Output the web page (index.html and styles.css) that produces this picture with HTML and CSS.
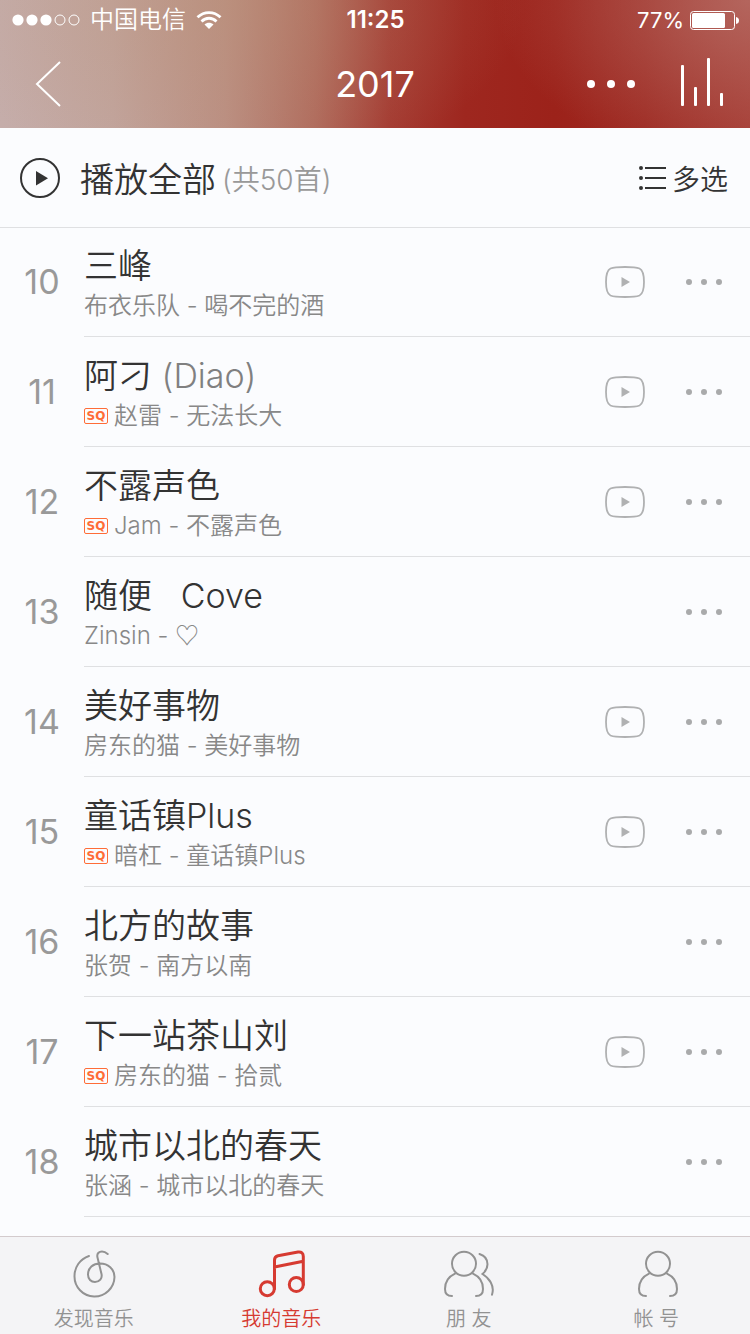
FILE: index.html
```
<!DOCTYPE html>
<html lang="zh-CN">

<head>
    <meta charset="UTF-8">
    <meta name="viewport" content="width=device-width, initial-scale=1.0">
    <title>2017</title>
    <link rel="stylesheet" href="styles.css">
</head>

<body>
    <!-- shared icons -->
    <svg class="sprite" aria-hidden="true">
        <symbol id="icon-video" viewBox="0 0 40 32">
            <path d="M20 1C28 1 32 1.500 34.500 2.500C37.500 4 39 7 39 16C39 25 37.500 28 34.500 29.500C32 30.500 28 31 20 31C12 31 8 30.500 5.500 29.500C2.500 28 1 25 1 16C1 7 2.500 4 5.500 2.500C8 1.500 12 1 20 1Z" fill="none" stroke="currentColor" stroke-width="1.800" />
            <path d="M16.500 11V21L25 16Z" fill="currentColor" />
        </symbol>
        <symbol id="icon-more" viewBox="0 0 36 6">
            <circle cx="3" cy="3" r="3" />
            <circle cx="18" cy="3" r="3" />
            <circle cx="33" cy="3" r="3" />
        </symbol>
    </svg>

    <header class="header">
        <div class="status">
            <div class="status-left">
                <svg class="signal" viewBox="0 0 68 12" aria-hidden="true">
                    <g fill="#fff">
                        <circle cx="6" cy="6" r="5.600" />
                        <circle cx="20" cy="6" r="5.600" />
                        <circle cx="34" cy="6" r="5.600" />
                    </g>
                    <g fill="none" stroke="#fff">
                        <circle cx="48" cy="6" r="5" />
                        <circle cx="62" cy="6" r="5" />
                    </g>
                </svg>
                <span>中国电信</span>
                <svg class="wifi" viewBox="0 0 26 18" aria-hidden="true">
                    <g fill="none" stroke="#fff" stroke-width="2.800">
                        <path d="M1.500 6.300C8 0 18 0 24.500 6.300" />
                        <path d="M5.500 10.400C9.800 6.200 16.200 6.200 20.500 10.400" />
                    </g>
                    <path d="M8.500 13.500C11 11.200 15 11.200 17.500 13.500L13 18Z" fill="#fff" />
                </svg>
            </div>
            <span class="time">11:25</span>
            <div class="status-right">
                <span>77%</span>
                <svg class="battery" viewBox="0 0 49 20" aria-hidden="true">
                    <rect x="0.500" y="1.500" width="44" height="18" rx="3" fill="none" stroke="#fff" />
                    <rect x="2" y="3" width="33" height="15" rx="1.500" fill="#fff" />
                    <path d="M46 7Q49 7.500 49 10.500Q49 13.500 46 14Z" fill="#fff" />
                </svg>
            </div>
        </div>
        <div class="navbar">
            <button type="button" class="icon-btn back" aria-label="返回">
                <svg width="26" height="46" viewBox="0 0 26 46"><path d="M25 1L2 23L25 45" fill="none" stroke="#fff" stroke-width="2" /></svg>
            </button>
            <h1>2017</h1>
            <div class="nav-actions">
                <button type="button" class="icon-btn" aria-label="更多">
                    <svg width="48" height="8" viewBox="0 0 48 8" fill="#fff"><circle cx="4" cy="4" r="4" /><circle cx="24" cy="4" r="4" /><circle cx="44" cy="4" r="4" /></svg>
                </button>
                <button type="button" class="icon-btn playing" aria-label="正在播放">
                    <svg width="42" height="52" viewBox="0 0 42 52" fill="#fff"><rect y="7" width="3" height="41" rx="1" /><rect x="13" y="29" width="3" height="19" rx="1" /><rect x="26" width="3" height="48" rx="1" /><rect x="39" y="35" width="3" height="13" rx="1" /></svg>
                </button>
            </div>
        </div>
    </header>

    <main>
        <div class="toolbar">
            <button type="button" class="play-all">
                <svg width="40" height="40" viewBox="0 0 40 40" aria-hidden="true"><circle cx="20" cy="20" r="19" fill="none" stroke="#333" stroke-width="2" /><path d="M16 13V27.500L28 20.300Z" fill="#333" /></svg>
                <span class="play-label">播放全部</span>
                <span class="count">(共50首)</span>
            </button>
            <button type="button" class="multi">
                <svg width="28" height="26" viewBox="0 0 28 26" aria-hidden="true"><g fill="#333"><circle cx="2" cy="3" r="2" /><circle cx="2" cy="13" r="2" /><circle cx="2" cy="23" r="2" /></g><path d="M6 3H27M6 13H27M6 23H27" stroke="#333" stroke-width="2" /></svg>
                多选
            </button>
        </div>

        <ol class="songs">
            <li>
                <span class="num">10</span>
                <div class="song">
                    <div class="info">
                        <h2>三峰</h2>
                        <p>布衣乐队 - 喝不完的酒</p>
                    </div>
                    <button type="button" class="icon-btn" aria-label="播放MV"><svg class="video"><use href="#icon-video" /></svg></button>
                    <button type="button" class="icon-btn" aria-label="更多"><svg class="more"><use href="#icon-more" /></svg></button>
                </div>
            </li>
            <li>
                <span class="num">11</span>
                <div class="song">
                    <div class="info">
                        <h2>阿刁 <span class="alias">(Diao)</span></h2>
                        <p><span class="sq">SQ</span>赵雷 - 无法长大</p>
                    </div>
                    <button type="button" class="icon-btn" aria-label="播放MV"><svg class="video"><use href="#icon-video" /></svg></button>
                    <button type="button" class="icon-btn" aria-label="更多"><svg class="more"><use href="#icon-more" /></svg></button>
                </div>
            </li>
            <li>
                <span class="num">12</span>
                <div class="song">
                    <div class="info">
                        <h2>不露声色</h2>
                        <p><span class="sq">SQ</span>Jam - 不露声色</p>
                    </div>
                    <button type="button" class="icon-btn" aria-label="播放MV"><svg class="video"><use href="#icon-video" /></svg></button>
                    <button type="button" class="icon-btn" aria-label="更多"><svg class="more"><use href="#icon-more" /></svg></button>
                </div>
            </li>
            <li>
                <span class="num">13</span>
                <div class="song">
                    <div class="info">
                        <h2>随便&nbsp;&nbsp; Cove</h2>
                        <p>Zinsin -&nbsp;<span class="heart">♡</span></p>
                    </div>
                    <button type="button" class="icon-btn" aria-label="更多"><svg class="more"><use href="#icon-more" /></svg></button>
                </div>
            </li>
            <li>
                <span class="num">14</span>
                <div class="song">
                    <div class="info">
                        <h2>美好事物</h2>
                        <p>房东的猫 - 美好事物</p>
                    </div>
                    <button type="button" class="icon-btn" aria-label="播放MV"><svg class="video"><use href="#icon-video" /></svg></button>
                    <button type="button" class="icon-btn" aria-label="更多"><svg class="more"><use href="#icon-more" /></svg></button>
                </div>
            </li>
            <li>
                <span class="num">15</span>
                <div class="song">
                    <div class="info">
                        <h2>童话镇Plus</h2>
                        <p><span class="sq">SQ</span>暗杠 - 童话镇Plus</p>
                    </div>
                    <button type="button" class="icon-btn" aria-label="播放MV"><svg class="video"><use href="#icon-video" /></svg></button>
                    <button type="button" class="icon-btn" aria-label="更多"><svg class="more"><use href="#icon-more" /></svg></button>
                </div>
            </li>
            <li>
                <span class="num">16</span>
                <div class="song">
                    <div class="info">
                        <h2>北方的故事</h2>
                        <p>张贺 - 南方以南</p>
                    </div>
                    <button type="button" class="icon-btn" aria-label="更多"><svg class="more"><use href="#icon-more" /></svg></button>
                </div>
            </li>
            <li>
                <span class="num">17</span>
                <div class="song">
                    <div class="info">
                        <h2>下一站茶山刘</h2>
                        <p><span class="sq">SQ</span>房东的猫 - 拾贰</p>
                    </div>
                    <button type="button" class="icon-btn" aria-label="播放MV"><svg class="video"><use href="#icon-video" /></svg></button>
                    <button type="button" class="icon-btn" aria-label="更多"><svg class="more"><use href="#icon-more" /></svg></button>
                </div>
            </li>
            <li>
                <span class="num">18</span>
                <div class="song">
                    <div class="info">
                        <h2>城市以北的春天</h2>
                        <p>张涵 - 城市以北的春天</p>
                    </div>
                    <button type="button" class="icon-btn" aria-label="更多"><svg class="more"><use href="#icon-more" /></svg></button>
                </div>
            </li>
        </ol>
    </main>

    <nav class="tabs">
        <a href="#discover">
            <svg width="48" height="48" viewBox="0 0 48 48" aria-hidden="true"><path d="M19 6C10 9 4.500 17 4.500 26A20 20 0 0 0 44.500 27C44.500 19 38 13.500 30 13.500C23 13.500 18 18 18 24.500C18 29 21 32 25 32C29.500 32 32.500 28.500 31.500 24L27.500 7.500C26.500 3.500 29 1.500 32 1.500C34 1.500 36 2.500 37.700 4" /></svg>
            <span>发现音乐</span>
        </a>
        <a href="#mine" class="active">
            <svg width="48" height="48" viewBox="0 0 48 48" aria-hidden="true"><circle cx="10.300" cy="38.700" r="7" /><circle cx="39.300" cy="34.500" r="7" /><path d="M17.500 38.700V10Q17.500 6.500 21 5.700L41 2.100Q46.300 1.500 46.300 6.500V34.500M17.500 17L46.300 11.300" /></svg>
            <span>我的音乐</span>
        </a>
        <a href="#friends">
            <svg width="50" height="48" viewBox="0 0 50 48" aria-hidden="true"><circle cx="20" cy="13.700" r="12" /><path d="M11 23.700C5 26.500 1 32 1 39C1 43.500 3.500 46 8 46M29 23.700C35 26.500 39 32 39 39C39 43.500 36.500 46 32 46M35.500 4C40.500 5.500 43.500 9.500 43.500 14.300C43.500 18 41.500 21.500 38.500 24C45 28 51 35.500 48 44.700" /></svg>
            <span>朋 友</span>
        </a>
        <a href="#account">
            <svg width="44" height="48" viewBox="-4 0 44 48" aria-hidden="true"><circle cx="20" cy="13.700" r="12" /><path d="M11 23.700C5 26.500 1 32 1 39C1 43.500 3.500 46 8 46M29 23.700C35 26.500 39 32 39 39C39 43.500 36.500 46 32 46" /></svg>
            <span>帐 号</span>
        </a>
    </nav>
</body>

</html>
```
FILE: styles.css
```
* {
    margin: 0;
    padding: 0;
    box-sizing: border-box;
}

body {
    min-height: 100vh;
    display: flex;
    flex-direction: column;
    background: #fbfcfe;
    color: #333;
    font-family: 'Inter', 'Noto Sans CJK SC', sans-serif;
    font-weight: 350;
}

button {
    border: none;
    background: none;
    color: inherit;
    font: inherit;
    cursor: pointer;
}

svg {
    display: block;
    flex-shrink: 0;
}

.sprite {
    position: absolute;
    width: 0;
    height: 0;
}

.icon-btn {
    display: flex;
    align-items: center;
}

/* Header */
.header {
    color: #fff;
    background:
        radial-gradient(ellipse 34% 130% at 100% 0%, rgba(190, 130, 122, 0.6), rgba(190, 130, 122, 0)),
        radial-gradient(ellipse 40% 140% at 30% 0%, rgba(186, 146, 118, 0.4), rgba(186, 146, 118, 0)),
        linear-gradient(90deg, #c5adaa 0%, #c2a59e 15%, #bb8f83 30%, #b06a5c 42%, #a43a31 52%, #9e271f 62%, #9c221a 74%, #9e2a22 86%, #a53a32 100%);
}

.status {
    height: 40px;
    padding: 0 11px 0 12px;
    display: grid;
    grid-template-columns: 1fr auto 1fr;
    align-items: center;
    font-size: 24px;
    line-height: 40px;
}

.status-left,
.status-right {
    display: flex;
    align-items: center;
}

.status-left {
    gap: 10px;
}

.status-right {
    justify-content: flex-end;
    gap: 6px;
    font-size: 22px;
    font-weight: 400;
}

.signal {
    width: 68px;
    height: 12px;
}

.wifi {
    width: 26px;
    height: 18px;
}

.battery {
    width: 49px;
    height: 20px;
}

.time {
    font-weight: 600;
}

.navbar {
    height: 88px;
    padding: 0 27px;
    display: grid;
    grid-template-columns: 1fr auto 1fr;
    align-items: center;
}

.back {
    padding-left: 8px;
}

.navbar h1 {
    font-size: 36px;
    font-weight: 400;
}

.nav-actions {
    display: flex;
    align-items: center;
    justify-content: flex-end;
    gap: 46px;
}

/* Play all / multi select */
.toolbar {
    height: 100px;
    padding: 0 22px 0 20px;
    display: flex;
    align-items: center;
    justify-content: space-between;
    border-bottom: 1px solid #dfe0e2;
}

.play-all,
.multi {
    display: flex;
    align-items: center;
}

.play-label {
    margin-left: 20px;
    font-size: 34px;
}

.count {
    margin-left: 6px;
    font-size: 28px;
    color: #999;
}

.multi {
    gap: 5px;
    font-size: 28px;
}

/* Song list */
.songs {
    list-style: none;
    margin-top: -1px;
}

.songs li {
    height: 110px;
    display: flex;
}

.num {
    width: 84px;
    line-height: 110px;
    text-align: center;
    font-size: 34px;
    font-weight: 400;
    color: #999;
}

.song {
    flex: 1;
    min-width: 0;
    padding-right: 28px;
    display: flex;
    align-items: center;
    gap: 41px;
    border-bottom: 1px solid #dfe0e2;
}

.info {
    flex: 1;
    min-width: 0;
    padding-top: 4px;
}

.info h2 {
    font-size: 34px;
    font-weight: 350;
    line-height: 44px;
}

.alias {
    color: #808080;
}

.info p {
    display: flex;
    align-items: center;
    font-size: 24px;
    line-height: 36px;
    color: #888;
}

.sq {
    width: 24px;
    height: 16px;
    margin-right: 6px;
    border: 1px solid #ff6c37;
    border-radius: 2px;
    color: #ff6c37;
    font-family: 'DejaVu Sans', sans-serif;
    font-size: 12px;
    font-weight: bold;
    line-height: 14px;
    text-align: center;
}

.heart {
    font-family: 'DejaVu Sans', sans-serif;
}

.video {
    width: 40px;
    height: 32px;
    color: #b0b1b2;
}

.more {
    width: 36px;
    height: 6px;
    fill: #a9aaab;
}

/* Bottom tabs */
.tabs {
    height: 98px;
    margin-top: auto;
    padding-top: 13px;
    display: grid;
    grid-template-columns: repeat(4, 1fr);
    background: #f4f4f6;
    border-top: 1px solid #d3cbcd;
}

.tabs a {
    display: flex;
    flex-direction: column;
    align-items: center;
    gap: 5px;
    color: #929292;
    font-size: 20px;
    line-height: 32px;
    text-decoration: none;
}

.tabs svg {
    fill: none;
    stroke: currentColor;
    stroke-width: 2;
    stroke-linecap: round;
}

.tabs .active {
    color: #d63a31;
}

.tabs .active svg {
    stroke-width: 3;
}
```
